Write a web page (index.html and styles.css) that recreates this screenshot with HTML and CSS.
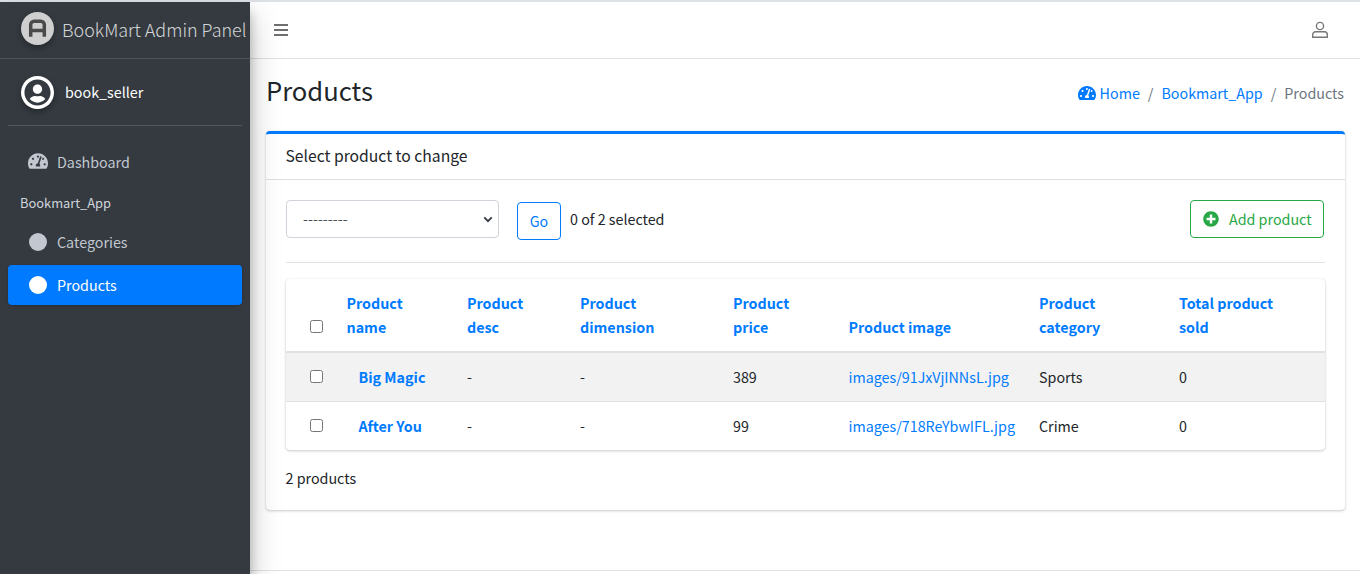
FILE: index.html
```html
<!DOCTYPE html>
<html lang="en">
<head>
<meta charset="utf-8">
<title>Products</title>
<link rel="stylesheet" href="styles.css">
</head>
<body>
<div class="wrapper">
  <aside class="sidebar">
    <a class="brand">
      <span class="brand-logo">
        <svg viewBox="0 0 34 34" width="33" height="33"><circle cx="17" cy="17" r="17" fill="#cfcfcf"/><path d="M10 25.5V13a3.5 3.5 0 0 1 3.5-3.5h7A3.5 3.5 0 0 1 24 13v12.5M10 19h14" fill="none" stroke="#4a4a4a" stroke-width="3.6"/></svg>
      </span>
      <span class="brand-text">BookMart Admin Panel</span>
    </a>
    <div class="user-panel">
      <span class="avatar">
        <svg viewBox="0 0 496 512" width="27" height="27"><path fill="#343a40" d="M248 8C111 8 0 119 0 256s111 248 248 248 248-111 248-248S385 8 248 8zm0 96c48.6 0 88 39.4 88 88s-39.4 88-88 88-88-39.4-88-88 39.4-88 88-88zm0 344c-58.7 0-111.3-26.6-146.5-68.2 18.8-35.4 55.6-59.8 98.5-59.8 2.4 0 4.8.4 7.1 1.1 13 4.2 26.6 6.9 40.9 6.9 14.3 0 28-2.7 40.9-6.9 2.3-.7 4.7-1.1 7.1-1.1 42.9 0 79.7 24.4 98.5 59.8C359.3 421.4 306.7 448 248 448z"/></svg>
      </span>
      <span class="user-name">book_seller</span>
    </div>
    <nav class="nav">
      <a class="nav-link">
        <svg class="nav-icon" viewBox="0 0 576 512" width="20" height="18"><path fill="#c2c7d0" d="M288 32C128.94 32 0 160.94 0 320c0 52.8 14.25 102.26 39.06 144.8 5.61 9.62 16.3 15.2 27.44 15.2h443c11.14 0 21.83-5.58 27.44-15.2C561.75 422.26 576 372.8 576 320c0-159.06-128.94-288-288-288zm0 64c14.71 0 26.58 10.13 30.32 23.65-1.11 2.26-2.64 4.23-3.45 6.67l-9.22 27.67c-5.13 3.49-10.97 6.01-17.64 6.01-17.67 0-32-14.33-32-32S270.33 96 288 96zM96 384c-17.67 0-32-14.33-32-32s14.33-32 32-32 32 14.33 32 32-14.33 32-32 32zm48-160c-17.67 0-32-14.33-32-32s14.33-32 32-32 32 14.33 32 32-14.33 32-32 32zm246.77-72.41l-61.33 184C343.13 347.33 352 364.54 352 384c0 11.72-3.38 22.55-8.88 32H232.88c-5.5-9.45-8.88-20.28-8.88-32 0-33.94 26.5-61.43 59.9-63.59l61.34-184.01c4.17-12.56 17.73-19.45 30.36-15.17 12.57 4.19 19.35 17.79 15.17 30.36zm14.66 57.2l15.52-46.55c3.47-1.29 7.13-2.23 11.05-2.23 17.67 0 32 14.33 32 32s-14.33 32-32 32c-11.38-.01-20.89-6.28-26.57-15.22zM480 384c-17.67 0-32-14.33-32-32s14.33-32 32-32 32 14.33 32 32-14.33 32-32 32z"/></svg>
        <span>Dashboard</span>
      </a>
      <div class="nav-header">Bookmart_App</div>
      <a class="nav-link nav-cat"><span class="dot"></span><span>Categories</span></a>
      <a class="nav-link nav-active"><span class="dot"></span><span>Products</span></a>
    </nav>
  </aside>
  <div class="main">
    <header class="topbar">
      <svg class="bars" viewBox="0 0 14 12" width="14" height="12"><path d="M0 0h14v2H0zM0 5h14v2H0zM0 10h14v2H0z" fill="#6f6f6f"/></svg>
      <svg class="user-outline" viewBox="0 0 16 18" width="16" height="18"><circle cx="8" cy="5" r="3.6" fill="none" stroke="#777" stroke-width="1.4"/><path d="M3.6 10.7h8.8a2.9 2.9 0 0 1 2.9 2.9v2.7H.7v-2.7a2.9 2.9 0 0 1 2.9-2.9z" fill="none" stroke="#777" stroke-width="1.4"/></svg>
    </header>
    <section class="page-head">
      <h1>Products</h1>
      <ol class="crumbs">
        <li><a><svg viewBox="0 0 576 512" width="18" height="16"><path fill="#007bff" d="M288 32C128.94 32 0 160.94 0 320c0 52.8 14.25 102.26 39.06 144.8 5.61 9.62 16.3 15.2 27.44 15.2h443c11.14 0 21.83-5.58 27.44-15.2C561.75 422.26 576 372.8 576 320c0-159.06-128.94-288-288-288zm0 64c14.71 0 26.58 10.13 30.32 23.65-1.11 2.26-2.64 4.23-3.45 6.67l-9.22 27.67c-5.13 3.49-10.97 6.01-17.64 6.01-17.67 0-32-14.33-32-32S270.33 96 288 96zM96 384c-17.67 0-32-14.33-32-32s14.33-32 32-32 32 14.33 32 32-14.33 32-32 32zm48-160c-17.67 0-32-14.33-32-32s14.33-32 32-32 32 14.33 32 32-14.33 32-32 32zm246.77-72.41l-61.33 184C343.13 347.33 352 364.54 352 384c0 11.72-3.38 22.55-8.88 32H232.88c-5.5-9.45-8.88-20.28-8.88-32 0-33.94 26.5-61.43 59.9-63.59l61.34-184.01c4.17-12.56 17.73-19.45 30.36-15.17 12.57 4.19 19.35 17.79 15.17 30.36zm14.66 57.2l15.52-46.55c3.47-1.29 7.13-2.23 11.05-2.23 17.67 0 32 14.33 32 32s-14.33 32-32 32c-11.38-.01-20.89-6.28-26.57-15.22zM480 384c-17.67 0-32-14.33-32-32s14.33-32 32-32 32 14.33 32 32-14.33 32-32 32z"/></svg> Home</a></li>
        <li class="sep">/</li>
        <li><a>Bookmart_App</a></li>
        <li class="sep">/</li>
        <li class="crumb-current">Products</li>
      </ol>
    </section>
    <section class="card">
      <div class="card-head">Select product to change</div>
      <div class="card-body">
        <div class="actions">
          <div class="select"><span>---------</span><svg viewBox="0 0 12 8" width="10" height="7"><path d="M1.5 1.5 6 6l4.5-4.5" fill="none" stroke="#343a40" stroke-width="2.2"/></svg></div>
          <button class="go">Go</button>
          <span class="count">0 of 2 selected</span>
          <a class="add">
            <svg viewBox="0 0 512 512" width="16" height="16"><path fill="#28a745" d="M256 8C119 8 8 119 8 256s111 248 248 248 248-111 248-248S393 8 256 8zm144 276c0 6.6-5.4 12-12 12h-92v92c0 6.6-5.4 12-12 12h-56c-6.6 0-12-5.4-12-12v-92h-92c-6.6 0-12-5.4-12-12v-56c0-6.6 5.4-12 12-12h92v-92c0-6.6 5.4-12 12-12h56c6.6 0 12 5.4 12 12v92h92c6.6 0 12 5.4 12 12v56z"/></svg>
            <span>Add product</span>
          </a>
        </div>
        <hr class="rule">
        <div class="table-card">
          <table>
            <colgroup>
              <col class="c-check"><col class="c-name"><col class="c-desc"><col class="c-dim"><col class="c-price"><col class="c-img"><col class="c-cat"><col class="c-sold">
            </colgroup>
            <thead>
              <tr>
                <th class="check"><span class="box"></span></th>
                <th>Product<br>name</th>
                <th>Product<br>desc</th>
                <th>Product<br>dimension</th>
                <th>Product<br>price</th>
                <th>Product image</th>
                <th>Product<br>category</th>
                <th>Total product<br>sold</th>
              </tr>
            </thead>
            <tbody>
              <tr class="odd">
                <td class="check"><span class="box"></span></td>
                <td class="title">Big Magic</td><td>-</td><td>-</td><td>389</td>
                <td><a>images/91JxVjINNsL.jpg</a></td><td>Sports</td><td>0</td>
              </tr>
              <tr>
                <td class="check"><span class="box"></span></td>
                <td class="title">After You</td><td>-</td><td>-</td><td>99</td>
                <td><a>images/718ReYbwIFL.jpg</a></td><td>Crime</td><td>0</td>
              </tr>
            </tbody>
          </table>
        </div>
        <p class="total">2 products</p>
      </div>
    </section>
    <footer class="foot"></footer>
  </div>
</div>
</body>
</html>
```
FILE: styles.css
```css
* { box-sizing: border-box; }
html, body { margin: 0; height: 100%; }
body {
  font-family: "Noto Sans CJK SC", "Noto Sans", sans-serif;
  font-size: 14.3px;
  line-height: 24px;
  color: #212529;
  background: #fff;
  overflow: hidden;
}
a { color: #007bff; text-decoration: none; }
.wrapper { display: flex; height: 574px; border-top: 2px solid #dee2e6; }
.sidebar {
  width: 250px;
  flex: none;
  background: #343a40;
  position: relative;
  z-index: 2;
  box-shadow: 0 14px 28px rgba(0,0,0,.25), 0 10px 10px rgba(0,0,0,.22);
  color: #c2c7d0;
}
.brand {
  display: flex;
  align-items: center;
  height: 57px;
  padding-left: 21px;
  border-bottom: 1px solid #4b545c;
}
.brand-logo { display: flex; width: 33px; height: 33px; border-radius: 50%; box-shadow: 0 3px 6px rgba(0,0,0,.3); margin-top: -4px; }
.brand-text { font-size: 17.95px; font-weight: 300; color: rgba(255,255,255,.8); margin-left: 8px; margin-top: -2px; white-space: nowrap; line-height: 30px; }
.user-panel {
  display: flex;
  align-items: center;
  height: 67px;
  margin: 0 8px;
  padding-left: 13px;
  border-bottom: 1px solid #4f5962;
}
.avatar {
  width: 33px; height: 33px; border-radius: 50%; background: #fff;
  display: flex; align-items: center; justify-content: center;
  box-shadow: 0 3px 6px rgba(0,0,0,.3);
}
.user-name { color: #fff; margin-left: 11px; }
.nav { padding: 16px 8px 0; display: flex; flex-direction: column; }
.nav-link { display: flex; align-items: center; height: 40px; padding-left: 20px; color: #c2c7d0; }
.nav-icon { margin-right: 9px; flex: none; margin-top: -2px; }
.nav-header { font-size: 12.87px; color: #d0d4db; padding: 0 12px; height: 22px; line-height: 22px; margin-top: 10px; margin-bottom: 8px; }
.dot { width: 18px; height: 18px; border-radius: 50%; background: #c2c7d0; margin-left: 1px; margin-right: 10px; flex: none; }
.nav-cat { margin-bottom: 3px; }
.nav-active { background: #007bff; color: #fff; border-radius: 4px; box-shadow: 0 1px 3px rgba(0,0,0,.2); }
.nav-active .dot { background: #fff; }
.main { flex: 1; min-width: 0; display: flex; flex-direction: column; }
.topbar {
  height: 57px; flex: none;
  display: flex; align-items: center; justify-content: space-between;
  padding: 0 32px 0 24px;
  border-bottom: 1px solid #dee2e6;
}
.page-head {
  display: flex; align-items: flex-start; justify-content: space-between;
  height: 72px; flex: none;
  padding: 14px 16px 0;
}
h1 { margin: 0; font-size: 25.6px; font-weight: 400; line-height: 34px; }
.crumbs { display: flex; align-items: center; list-style: none; margin: 8px 0 0; padding: 0; }
.crumbs svg { vertical-align: -2px; }
.sep { color: #6c757d; padding: 0 8px; }
.crumb-current { color: #6c757d; }
.card {
  margin: 0 15px 0 16px;
  height: 379px;
  flex: none;
  border-top: 3px solid #007bff;
  border-radius: 4px;
  background: #fff;
  box-shadow: 0 0 1px rgba(0,0,0,.125), 0 1px 3px rgba(0,0,0,.2);
}
.card-head { height: 46px; padding: 0 20px 2px 19.5px; display: flex; align-items: center; font-size: 15.7px; border-bottom: 1px solid rgba(0,0,0,.125); }
.card-body { padding: 20px; }
.actions { display: flex; align-items: flex-start; height: 38px; }
.select {
  width: 213px; height: 38px;
  border: 1px solid #ced4da; border-radius: 4px;
  display: flex; align-items: center; justify-content: space-between;
  padding: 0 5px 0 16px; color: #495057;
}
.go {
  width: 44px; height: 38px; margin: 2px 0 0 18px;
  font: inherit; color: #007bff; background: #fff;
  border: 1px solid #007bff; border-radius: 4px; padding: 0;
}
.count { margin-left: 9px; line-height: 38px; }
.add {
  margin-left: auto; margin-right: 1px;
  width: 134px; height: 38px;
  border: 1px solid #28a745; border-radius: 4px; color: #28a745;
  display: flex; align-items: center; padding-left: 12px;
}
.add span { margin-left: 10px; }
.rule { border: 0; border-top: 1px solid #dee2e6; margin: 24px 0 16px; }
.table-card { border-radius: 4px; box-shadow: 0 0 1px rgba(0,0,0,.125), 0 1px 3px rgba(0,0,0,.2); overflow: hidden; }
table { width: 100%; table-layout: fixed; border-collapse: collapse; }
.c-check { width: 48.5px; } .c-name { width: 120.5px; } .c-desc { width: 113px; } .c-dim { width: 153px; }
.c-price { width: 115.5px; } .c-img { width: 190.5px; } .c-cat { width: 140px; }
th { text-align: left; vertical-align: bottom; color: #007bff; font-weight: 700; padding: 12px; border-bottom: 2px solid #dee2e6; }
td { padding: 0 12px; height: 49px; border-top: 1px solid #dee2e6; }
th.check, td.check { padding-left: 24px; padding-right: 0; }
thead tr { height: 73px; }
tbody tr:first-child td { border-top: 0; }
.odd { background: #f2f2f2; }
td.title { color: #007bff; font-weight: 700; padding-left: 24px; }
th.check { padding-bottom: 18px; }
.box { display: block; width: 13px; height: 13px; border: 1px solid #767676; border-radius: 2.5px; background: #fff; }
.total { margin: 16px 0 0 -0.5px; }
.foot { margin-top: auto; height: 4px; border-top: 1px solid #dee2e6; }
```
